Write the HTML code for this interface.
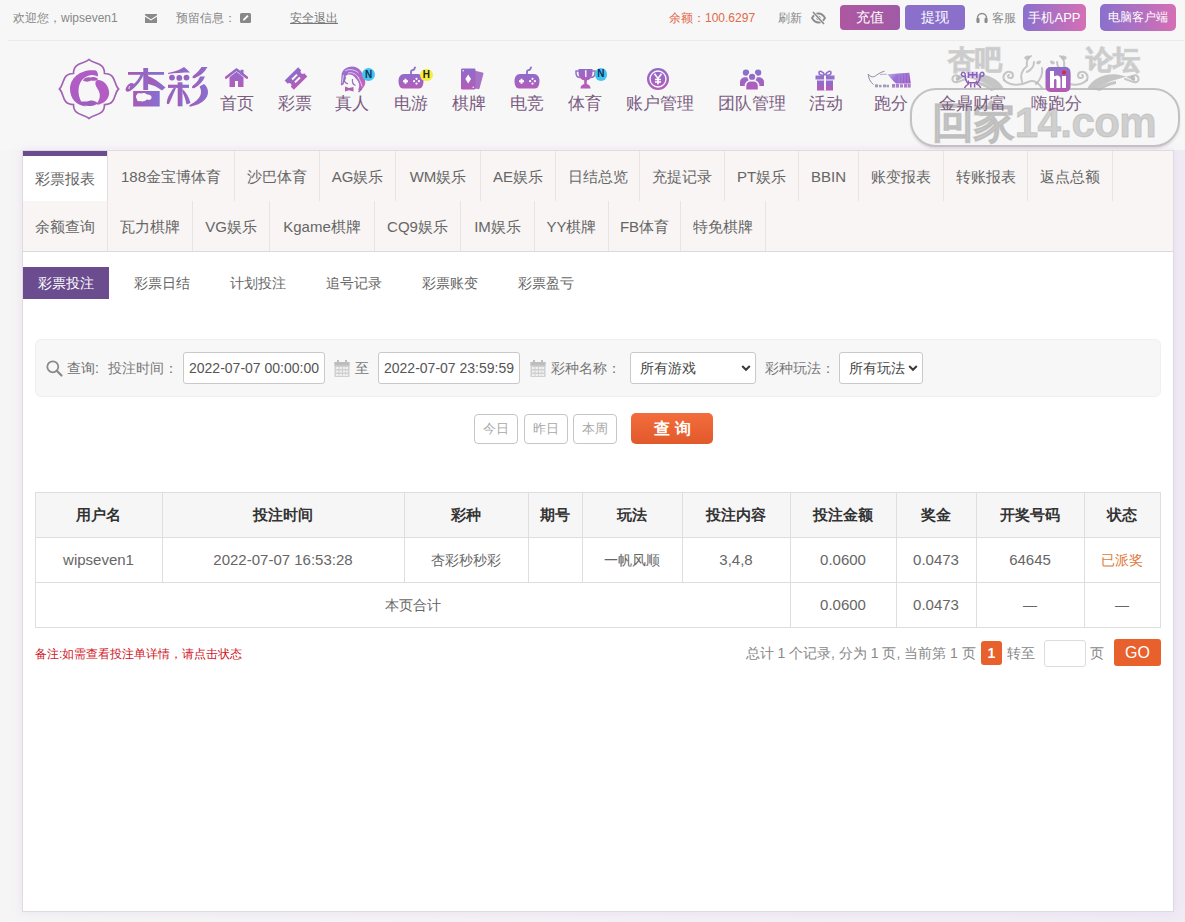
<!DOCTYPE html><html><head><meta charset="utf-8"><style>
*{margin:0;padding:0;box-sizing:border-box}
html,body{width:1185px;height:922px;overflow:hidden}
body{font-family:"Liberation Sans",sans-serif;background:linear-gradient(90deg,#f4f5f4 0,#f2f1f4 50%,#efecf4 100%);position:relative;color:#666}
.a{position:absolute;white-space:nowrap}
svg.a{overflow:visible}
#top{position:absolute;left:0;top:0;width:1185px;height:41px;background:#f7f7f7}
#topl{position:absolute;left:8px;top:40px;width:1176px;height:1px;background:#ebebeb}
.t{position:absolute;font-size:12px;line-height:16px;color:#888;white-space:nowrap}
.btn{position:absolute;border-radius:4px;color:#fff;text-align:center;white-space:nowrap}
#hdr{position:absolute;left:0;top:41px;width:1185px;height:109px;background:#f7f7f7}
.nav{position:absolute;font-size:17px;line-height:17px;color:#7b5c82;white-space:nowrap}
#panel{position:absolute;left:22px;top:150px;width:1152px;height:762px;background:#fff;border:1px solid #dddbe0;box-shadow:0 0 9px rgba(220,170,240,.26)}
.tabbg{position:absolute;left:23px;top:151px;width:1150px;height:101px;background:#f8f5f4;border-bottom:1px solid #dbd9d9}
.tab{position:absolute;height:50px;border-right:1px solid #e8e4e4;font-size:15px;line-height:51px;color:#666;text-align:center;white-space:nowrap}
.tab.on{background:#fff;box-shadow:inset 0 5px 0 #6b4d8f;line-height:56px;border-right-color:#e2dede}
.sub{position:absolute;top:267px;height:32px;font-size:14px;line-height:32px;color:#666;white-space:nowrap;text-align:center}
.sub.on{background:#6b4d8f;color:#fff}
.lbl{position:absolute;font-size:14px;line-height:16px;color:#777;white-space:nowrap}
.inp{position:absolute;height:32px;background:#fff;border:1px solid #c9c9c9;border-radius:3px;font-size:14px;line-height:30px;color:#555;white-space:nowrap;overflow:hidden}
.sbtn{position:absolute;top:414px;width:44px;height:30px;border:1px solid #c6c6c6;border-radius:4px;font-size:13px;line-height:28px;color:#a8a8a8;text-align:center;background:#fff}
.hl{position:absolute;height:1px;background:#dedede}
.vl{position:absolute;width:1px;background:#dedede}
.c{position:absolute;text-align:center;font-size:14px;line-height:16px;color:#666;white-space:nowrap}
.c.h{color:#333;font-weight:bold;font-size:15px}
</style></head><body>
<div id="top"></div><div id="topl"></div>
<div class="t" style="left:13px;top:10px">欢迎您，wipseven1</div>
<svg class="a" style="left:145px;top:14px" width="12" height="9" viewBox="0 0 12 9"><path d="M0 0H12V1.3L6 5.2 0 1.3Z M0 2.8L6 6.6 12 2.8V9H0Z" fill="#8a8a8a"/></svg>
<div class="t" style="left:176px;top:10px">预留信息：</div>
<svg class="a" style="left:240px;top:13px" width="11" height="10" viewBox="0 0 11 10"><rect width="11" height="10" rx="1.5" fill="#888"/><path d="M2.8 7.6L3.3 5.9 7.3 1.9 8.6 3.2 4.6 7.2Z" fill="#fff"/></svg>
<div class="t" style="left:290px;top:10px;color:#777;text-decoration:underline">安全退出</div>
<div class="t" style="left:669px;top:10px;color:#e2694a">余额：100.6297</div>
<div class="t" style="left:778px;top:10px;color:#888">刷新</div>
<svg class="a" style="left:811px;top:11px" width="15" height="14" viewBox="0 0 15 14"><path d="M1 7C3 3.5 5 2.5 7.5 2.5S12 3.5 14 7C12 10.5 10 11.5 7.5 11.5S3 10.5 1 7Z" fill="none" stroke="#8a8a8a" stroke-width="1.8"/><circle cx="7.5" cy="7" r="2.2" fill="#8a8a8a"/><path d="M2 1L13 13" stroke="#f7f7f7" stroke-width="3"/><path d="M2 1L13 13" stroke="#8a8a8a" stroke-width="1.6"/></svg>
<div class="btn" style="left:840px;top:5px;width:60px;height:25px;line-height:25px;font-size:14px;border-radius:4px;background:linear-gradient(90deg,#ae57a1,#a05ba6)">充值</div>
<div class="btn" style="left:905px;top:5px;width:60px;height:25px;line-height:25px;font-size:14px;border-radius:4px;background:#8a70cb">提现</div>
<svg class="a" style="left:976px;top:12px" width="12" height="11" viewBox="0 0 12 11"><path d="M1.5 9V6A4.5 4.5 0 0 1 10.5 6V9" fill="none" stroke="#8a8a8a" stroke-width="1.4"/><rect x="0.5" y="6" width="3" height="5" rx="1" fill="#8a8a8a"/><rect x="8.5" y="6" width="3" height="5" rx="1" fill="#8a8a8a"/></svg>
<div class="t" style="left:992px;top:10px;color:#888">客服</div>
<div class="btn" style="left:1023px;top:4px;width:63px;height:27px;line-height:27px;font-size:13px;border-radius:5px;background:linear-gradient(90deg,#8a70cc,#d66fb5)">手机APP</div>
<div class="btn" style="left:1100px;top:4px;width:76px;height:27px;line-height:27px;font-size:12px;border-radius:5px;background:linear-gradient(90deg,#8a70cc,#d66fb5)">电脑客户端</div>
<div id="hdr"></div>
<svg width="0" height="0" style="position:absolute"><defs>
<linearGradient id="pg" x1="0" y1="0" x2="0" y2="1"><stop offset="0" stop-color="#8f6ccb"/><stop offset="1" stop-color="#b45cb8"/></linearGradient>
<linearGradient id="pg2" x1="0" y1="0" x2="1" y2="1"><stop offset="0" stop-color="#8a6fcc"/><stop offset="1" stop-color="#c05fb4"/></linearGradient>
<linearGradient id="lg" x1="0" y1="0" x2="1" y2="0"><stop offset="0" stop-color="#a85bb2"/><stop offset="1" stop-color="#8c6dcb"/></linearGradient>
</defs></svg>
<svg class="a" style="left:56px;top:56px" width="66" height="66" viewBox="0 0 66 66">
<defs><linearGradient id="emg" x1="0" y1="0" x2="1" y2="1"><stop offset="0" stop-color="#b95bc6"/><stop offset="1" stop-color="#9b5fc0"/></linearGradient></defs>
<path d="M33.0 3.5C37.5 8.5 48.5 5.5 48.5 17.5C60.5 17.5 57.5 28.5 62.5 33.0C57.5 37.5 60.5 48.5 48.5 48.5C48.5 60.5 37.5 57.5 33.0 62.5C28.5 57.5 17.5 60.5 17.5 48.5C5.5 48.5 8.5 37.5 3.5 33.0C8.5 28.5 5.5 17.5 17.5 17.5C17.5 5.5 28.5 8.5 33.0 3.5Z" fill="none" stroke="#a263b2" stroke-width="1.7"/>
<path d="M40 14.5C26 12.5 14 21 14 33C14 43 21 49.5 30 50.5C25 47 22.5 41 22.5 35C22.5 26 28 19.5 36 19C38 19 40 19.5 42 20.5C42 17.5 41.5 15.5 40 14.5Z" fill="url(#emg)"/>
<path d="M27 24.5C28 21.5 32 20.5 35 21.5C37 20.5 41 21 42 23.5C40 25 37 25 35 24.5C33 26 29 26 27 24.5Z" fill="#a95dbd"/>
<path d="M42 24C47 24 52 28.5 53 35C54 41 50 46.5 43 48.5C41 49 40 48 41.5 46.5C44 43 44.5 39 43 35.5C42 33 40 31 39.5 28.5C39 26 40 24 42 24Z" fill="#b25cc4"/>
<path d="M23 47C26 44.5 30 46 33 45C36 44 39 44.5 42 47.5C37 51 28 51 23 47Z" fill="#9d5fbf"/>
</svg>
<svg class="a" style="left:120px;top:55px" width="95" height="60" viewBox="0 0 95 60">
<defs><linearGradient id="lt" x1="0" y1="0" x2="1" y2="0"><stop offset="0" stop-color="#a65ab6"/><stop offset="1" stop-color="#8670d0"/></linearGradient></defs>
<g fill="url(#lt)">
<rect x="8" y="17" width="36" height="2.8"/>
<rect x="23.3" y="13" width="4.8" height="22"/>
<path d="M24 19C21 26 16 32 10 36C6 38 4.5 35 6.5 32C8.5 28.5 12 27 14 29C17 26 19.5 22.5 21 18.5Z"/><path d="M10 31C9 32 8.5 33.5 9.5 34" fill="none" stroke="#f7f7f7" stroke-width="1"/>
<path d="M28 21C34 23 40 27.5 45.5 32.5L42 35.5C37.5 32 33 30 28 29Z"/>
<path d="M13.2 36H39.7V51.5H13.2ZM17 39.5C17 38.5 19 38 21 38.5C23 37.5 26 38 27 39.5C30 39.5 32 41 31.5 43C31 45 29 45.5 27 44.5C25 46.5 22 47 20 46C18 47 16.5 45.5 17 44C15.5 43 15.5 40.5 17 39.5Z" fill-rule="evenodd"/>
<path d="M48 18C53 17 60 15 64 12C66 13.5 68 15.5 70 17.5C63 17.5 55 18 48 19Z"/>
<circle cx="52" cy="22.6" r="2.9"/><circle cx="59.3" cy="22.9" r="2.9"/><circle cx="66.5" cy="22.6" r="2.9"/>
<rect x="48" y="29.7" width="21" height="3.2"/>
<rect x="57.7" y="27.3" width="4.8" height="24"/>
<path d="M56 33C54 38 51.5 43 49.5 48C48.5 50 46.5 49.5 46.8 47C47.2 43.5 49 40 51 37C52 35 53 33.5 54 33Z"/>
<path d="M62.5 34C66 37.5 69 42 70.5 48L66.5 49.5C65.5 44.5 64 40 62.5 37.5Z"/>
<path d="M87.5 12C84 18 80.5 20.5 75 23C72.5 24 71.5 22 73.5 20.5C77 18 79.5 15 81.5 12Z"/>
<path d="M85 21.5C83 26.5 79.5 30 74.5 33C72 34 71 32 73 30.5C76.5 28 78.5 25 80 21.5Z"/>
<path d="M84 29C88 32.5 89 37 87 41.5C84 47 78 50 71 51.5C69 52 68.5 50.5 70.5 49.5C75.5 47 79 44 80.5 40C81.5 37 81 34 79.5 31.5Z"/>
</g></svg>
<div class="a" style="left:948px;top:44px;font-size:27px;line-height:32px;font-weight:bold;-webkit-text-stroke:1.2px rgba(200,200,200,.7);color:rgba(200,200,200,.7)">杏吧</div>
<div class="a" style="left:1086px;top:44px;font-size:27px;line-height:32px;font-weight:bold;-webkit-text-stroke:1.2px rgba(200,200,200,.7);color:rgba(200,200,200,.7)">论坛</div>
<svg class="a" style="left:0;top:0" width="1185" height="150" viewBox="0 0 1185 150"><g fill="none" stroke="rgba(185,185,185,.8)" stroke-width="2" stroke-linecap="round">
<path d="M1004 80C1002 75 1006 71 1010 72C1014 73 1014 78 1010 78C1008 78 1007 76 1009 75"/>
<path d="M1004 80C1010 86 1020 86 1028 82C1034 79 1038 82 1042 88"/>
<path d="M1022 82C1020 76 1022 70 1027 66M1027 66C1026 61 1028 58 1031 56M1027 72C1031 70 1034 66 1034 62"/>
<path d="M1036 84C1040 80 1043 74 1042 68"/>
<path d="M966 79C960 81 955 84 953 81C951 77 955 74 958 76C960 77.5 959 80 957 79.5"/>
</g>
<g fill="rgba(180,180,180,.75)">
<path d="M1004 89C998 77 982 71 967 76C961 78 957 82 956 80C955 76 959 74 962 76C972 79 986 81 995 90Z"/><path d="M975 81C983 82 990 85 995 90L991 91C986 87 981 85 975 84Z"/>
<path d="M1024 58C1026 55 1029 55 1030 57C1029 60 1026 61 1024 58Z"/>
<path d="M1036 63C1038 60 1041 60 1041 62C1040 65 1037 65 1036 63Z"/>
</g><g transform="translate(2091 0) scale(-1 1)"><g fill="none" stroke="rgba(185,185,185,.8)" stroke-width="2" stroke-linecap="round">
<path d="M1004 80C1002 75 1006 71 1010 72C1014 73 1014 78 1010 78C1008 78 1007 76 1009 75"/>
<path d="M1004 80C1010 86 1020 86 1028 82C1034 79 1038 82 1042 88"/>
<path d="M1022 82C1020 76 1022 70 1027 66M1027 66C1026 61 1028 58 1031 56M1027 72C1031 70 1034 66 1034 62"/>
<path d="M1036 84C1040 80 1043 74 1042 68"/>
<path d="M966 79C960 81 955 84 953 81C951 77 955 74 958 76C960 77.5 959 80 957 79.5"/>
</g>
<g fill="rgba(180,180,180,.75)">
<path d="M1004 89C998 77 982 71 967 76C961 78 957 82 956 80C955 76 959 74 962 76C972 79 986 81 995 90Z"/><path d="M975 81C983 82 990 85 995 90L991 91C986 87 981 85 975 84Z"/>
<path d="M1024 58C1026 55 1029 55 1030 57C1029 60 1026 61 1024 58Z"/>
<path d="M1036 63C1038 60 1041 60 1041 62C1040 65 1037 65 1036 63Z"/>
</g></g></svg>
<div class="a" style="left:910px;top:88px;width:270px;height:59px;border:2px solid rgba(185,185,185,.85);border-radius:26px;box-shadow:0 2px 2px rgba(150,150,150,.25)"></div>
<div class="a" style="left:932px;top:95px;font-size:42px;line-height:56px;font-weight:bold;-webkit-text-stroke:1px rgba(180,180,180,.6);color:rgba(180,180,180,.6);letter-spacing:-0.6px">回家14.com</div>
<div class="nav" style="left:176.85px;top:94.5px;width:120px;text-align:center">首页</div>
<div class="nav" style="left:234.50px;top:94.5px;width:120px;text-align:center">彩票</div>
<div class="nav" style="left:292.00px;top:94.5px;width:120px;text-align:center">真人</div>
<div class="nav" style="left:350.90px;top:94.5px;width:120px;text-align:center">电游</div>
<div class="nav" style="left:408.50px;top:94.5px;width:120px;text-align:center">棋牌</div>
<div class="nav" style="left:466.50px;top:94.5px;width:120px;text-align:center">电竞</div>
<div class="nav" style="left:524.50px;top:94.5px;width:120px;text-align:center">体育</div>
<div class="nav" style="left:599.70px;top:94.5px;width:120px;text-align:center">账户管理</div>
<div class="nav" style="left:691.70px;top:94.5px;width:120px;text-align:center">团队管理</div>
<div class="nav" style="left:766.35px;top:94.5px;width:120px;text-align:center">活动</div>
<div class="nav" style="left:831.35px;top:94.5px;width:120px;text-align:center">跑分</div>
<div class="nav" style="left:913.10px;top:94.5px;width:120px;text-align:center">金鼎财富</div>
<div class="nav" style="left:996.80px;top:94.5px;width:120px;text-align:center">嗨跑分</div>
<svg class="a" style="left:225px;top:68px" width="23" height="19" viewBox="0 0 23 19"><path d="M1.2 9.6L11.5 1.5 21.8 9.6" fill="none" stroke="url(#pg)" stroke-width="2.6" stroke-linejoin="round" stroke-linecap="round"/><rect x="15.5" y="1.8" width="3" height="5" fill="#8f6ccb"/><path d="M4.5 9.3L11.5 3.8 18.5 9.3V19H13V13H10V19H4.5Z" fill="url(#pg)"/></svg>
<svg class="a" style="left:278px;top:62px" width="36" height="32" viewBox="0 0 36 32"><g transform="rotate(-45 18 16.5)"><path d="M8.5 10H27.5V14.3A2.2 2.2 0 0 0 27.5 18.7V23H8.5V18.7A2.2 2.2 0 0 0 8.5 14.3Z" fill="url(#pg)"/><rect x="14.5" y="13.5" width="7" height="1.9" fill="#fff"/><rect x="14.5" y="17.6" width="7" height="1.9" fill="#fff"/></g></svg>
<svg class="a" style="left:336px;top:62px" width="40" height="34" viewBox="0 0 40 34">
<defs><linearGradient id="hg" x1="0" y1="0" x2="1" y2="1"><stop offset="0" stop-color="#8f72d2"/><stop offset="1" stop-color="#c761bb"/></linearGradient></defs>
<path d="M5.5 14C5.5 8 10.5 4.5 16 4.5C22 4.8 25 8.5 27 12.5C29 16.5 30 20 28.8 23C27.8 25.5 26 26.5 24.5 29L22.2 28C23 25.5 24 23 22.3 20C20.5 17 18.5 14.5 16 13C13.5 12 10.5 12.3 9.5 14.5C9 17 8.5 19.5 7.5 22.5L5 23.5C4.5 20.5 5.5 17.5 5.5 14Z" fill="url(#hg)"/>
<g fill="none" stroke="#f0e2f6" stroke-width="0.8"><path d="M9 9C13 6.5 19 7.5 22.5 11"/><path d="M12 11C16 9.8 20 12 23 16"/><path d="M21.5 14.5C24 18 25 21 26.2 24.5"/><path d="M7.5 13C7 16 6.5 19 6 21"/></g>
<path d="M9.5 15C9 17 8.7 18.5 8 19.5L9.5 20.2C9.8 21.2 10.5 21.8 12 21.6" fill="none" stroke="#8a70b0" stroke-width="1.2"/>
<path d="M16.5 17C16 20 17 22.5 19.5 23.5" fill="none" stroke="#9a6cbf" stroke-width="1.2"/>
<path d="M9 24.5L13 26 17.5 25V29.5L13 28.2 9 29.5Z" fill="#b060b0"/>
<path d="M26 26.5L22.5 30" stroke="#9a6aa8" stroke-width="1.4"/>
</svg>
<div class="a" style="left:362px;top:68px;width:13px;height:13px;border-radius:50%;background:#3fc6ee;color:#1a2a5a;font-size:10px;line-height:13px;text-align:center;font-weight:bold">N</div>
<svg class="a" style="left:398px;top:66.5px" width="26" height="22" viewBox="0 0 26 22">
<path d="M13 7V4.5C13 3 15 3.5 16 2.5C16.8 1.8 16.5 1 17 0.5" fill="none" stroke="#8e6fca" stroke-width="1.8" stroke-linecap="round"/>
<path d="M6 7H20C23.5 7 25.5 10 25.5 14C25.5 18 24 21.5 21 21.5H5C2 21.5 0.5 18 0.5 14C0.5 10 2.5 7 6 7Z" fill="url(#pg)"/>
<path d="M5 14.2H10M7.5 11.7V16.7" stroke="#fff" stroke-width="1.9"/>
<circle cx="18.5" cy="11.8" r="1.1" fill="#fff"/><circle cx="18.5" cy="16.6" r="1.1" fill="#fff"/><circle cx="16.1" cy="14.2" r="1.1" fill="#fff"/><circle cx="20.9" cy="14.2" r="1.1" fill="#fff"/>
</svg>
<div class="a" style="left:420px;top:68.5px;width:12.5px;height:12.5px;border-radius:50%;background:#f5ef3c;color:#222;font-size:10px;line-height:12.5px;text-align:center;font-weight:bold">H</div>
<svg class="a" style="left:460px;top:68px" width="24" height="22" viewBox="0 0 24 22">
<path d="M14 2.5L22.5 4.5C23.3 4.7 23.6 5.3 23.4 6L19.6 20.3C19.4 21 18.8 21.3 18 21.1L15 20.4Z" fill="#a673c6"/>
<rect x="1" y="0.5" width="14.5" height="21" rx="1.3" fill="url(#pg)"/>
<path d="M8.2 6.5L11 11 8.2 15.5 5.4 11Z" fill="#fff"/>
<rect x="2.5" y="2" width="1.4" height="1.4" fill="#fff" opacity=".8"/><rect x="12.6" y="18.6" width="1.4" height="1.4" fill="#fff" opacity=".8"/>
</svg>
<svg class="a" style="left:514px;top:66.5px" width="26" height="22" viewBox="0 0 26 22">
<path d="M13 7V4.5C13 3 15 3.5 16 2.5C16.8 1.8 16.5 1 17 0.5" fill="none" stroke="#8e6fca" stroke-width="1.8" stroke-linecap="round"/>
<path d="M6 7H20C23.5 7 25.5 10 25.5 14C25.5 18 24 21.5 21 21.5H5C2 21.5 0.5 18 0.5 14C0.5 10 2.5 7 6 7Z" fill="url(#pg)"/>
<path d="M5 14.2H10M7.5 11.7V16.7" stroke="#fff" stroke-width="1.9"/>
<circle cx="18.5" cy="11.8" r="1.1" fill="#fff"/><circle cx="18.5" cy="16.6" r="1.1" fill="#fff"/><circle cx="16.1" cy="14.2" r="1.1" fill="#fff"/><circle cx="20.9" cy="14.2" r="1.1" fill="#fff"/>
</svg>
<svg class="a" style="left:575px;top:68px" width="21" height="21" viewBox="0 0 21 21">
<path d="M3.5 1H17.5C17.5 1 17.5 3 17.5 4C17.5 9.5 14.5 12.5 10.5 12.5C6.5 12.5 3.5 9.5 3.5 4Z" fill="url(#pg)"/>
<path d="M4 3H1V5C1 8 3 9.5 5.5 9.5M17 3H20V5C20 8 18 9.5 15.5 9.5" fill="none" stroke="#9470c8" stroke-width="1.5"/>
<rect x="9.2" y="12" width="2.6" height="4.5" fill="#b05fb8"/>
<path d="M5.5 20.5C5.5 17.5 7.5 16 10.5 16S15.5 17.5 15.5 20.5Z" fill="#b45cb8"/>
<path d="M10 3.5L10.8 3V9" stroke="#fff" stroke-width="1.3" fill="none"/>
</svg>
<div class="a" style="left:594.5px;top:68px;width:12.5px;height:12.5px;border-radius:50%;background:#3fc6ee;color:#1a2a5a;font-size:10px;line-height:12.5px;text-align:center;font-weight:bold">N</div>
<svg class="a" style="left:647px;top:67.5px" width="22" height="22" viewBox="0 0 22 22">
<circle cx="11" cy="11" r="11" fill="url(#pg)"/><circle cx="11" cy="11" r="8" fill="none" stroke="#fff" stroke-width="1.3"/>
<path d="M7.5 5.8L11 10.5 14.5 5.8M11 10.5V16.5M8 11.5H14M8 14H14" fill="none" stroke="#fff" stroke-width="1.5"/>
</svg>
<svg class="a" style="left:730px;top:62px" width="44" height="32" viewBox="0 0 44 32">
<defs><linearGradient id="ug" gradientUnits="userSpaceOnUse" x1="0" y1="7" x2="0" y2="28"><stop offset="0" stop-color="#8274d0"/><stop offset="1" stop-color="#b658bb"/></linearGradient></defs>
<g fill="url(#ug)">
<circle cx="16" cy="10.6" r="3.2"/><circle cx="28.1" cy="10.6" r="3.2"/>
<path d="M10 24V20C10 17 12.5 15.2 15.5 15.2H17C20 15.2 21 17 21 19V24Z"/>
<path d="M23 24V19C23 17 24 15.2 27 15.2H28.5C31.5 15.2 34 17 34 20V24Z"/>
</g>
<g stroke="#f7f7f7" stroke-width="1.6" fill="url(#ug)">
<circle cx="22.1" cy="14.9" r="3.9"/>
<path d="M15.5 28.2V24C15.5 20.8 18 18.6 21 18.6H23.2C26.2 18.6 28.6 20.8 28.6 24V28.2Z"/>
</g></svg>
<svg class="a" style="left:815px;top:70px" width="20" height="21" viewBox="0 0 20 21">
<path d="M10 5.5C8 1 4 0 4 3C4 5 8 5.5 10 5.5C12 5.5 16 5 16 3C16 0 12 1 10 5.5Z" fill="none" stroke="#9070cb" stroke-width="1.6"/>
<rect x="0.5" y="5.5" width="19" height="4" fill="#9470cb"/>
<rect x="2" y="10.5" width="16" height="10" fill="url(#pg)"/>
<rect x="9" y="5.5" width="2" height="15" fill="#f6f5f7"/>
</svg>
<svg class="a" style="left:862px;top:64px" width="56" height="28" viewBox="0 0 56 28">
<defs><linearGradient id="rg" x1="0" y1="0" x2="1" y2="0.4"><stop offset="0" stop-color="#c8b8e8"/><stop offset=".45" stop-color="#9a74d4"/><stop offset="1" stop-color="#9b5cc8"/></linearGradient></defs>
<path d="M6.2 10C8 12.5 10 13.5 12.5 12.5C15 11 17.5 8.5 22.5 7.2" fill="none" stroke="#8d8d9d" stroke-width="1"/>
<path d="M6.2 10C6.5 14 8 18 11.5 20.5" fill="none" stroke="#8d8d9d" stroke-width="1"/>
<path d="M18 10.5L25 10.2" stroke="#a9a0c8" stroke-width="0.8"/>
<path d="M25.5 10.3L47.3 8.8L48.8 19.5L34 19.5C30.5 16.5 28 13 25.5 10.3Z" fill="url(#rg)"/>
<g stroke="#b89be0" stroke-width="0.6"><path d="M37 9V19M40 9V19M43 9V19M46 9V19"/></g>
<g fill="#8a7aa0" opacity=".75"><rect x="13" y="20.3" width="3" height="3"/><rect x="17" y="20.8" width="2.5" height="2.5"/><rect x="21" y="20.5" width="3" height="2.8"/><rect x="24.5" y="20.8" width="2.5" height="2.5"/></g>
<g fill="#9a62c0" opacity=".8"><rect x="30" y="20" width="3.2" height="3.6"/><rect x="34" y="20" width="3" height="3.6"/><rect x="38" y="20.3" width="3" height="3.2"/><rect x="42" y="20" width="3" height="3.6"/><rect x="45.5" y="20" width="3.2" height="3.6"/></g>
</svg>
<svg class="a" style="left:1045px;top:66.5px" width="26" height="25" viewBox="0 0 26 25">
<defs><linearGradient id="hig" x1="0" y1="0" x2="0" y2="1"><stop offset="0" stop-color="#8c6dcc"/><stop offset="1" stop-color="#b55ab3"/></linearGradient></defs>
<rect x="0.5" y="0" width="25" height="25" rx="5" fill="url(#hig)"/>
<path d="M5 4H9V9.5C10 8.7 11 8.5 12 8.5C14.5 8.5 15.5 10 15.5 12.5V21H11.5V13.5C11.5 12.5 11 12 10.3 12S9 12.5 9 13.5V21H5Z" fill="#fff"/>
<rect x="17" y="9" width="4" height="12" fill="#fff"/>
<circle cx="19" cy="5.5" r="2" fill="#e8203a"/>
</svg>
<svg class="a" style="left:955px;top:64px" width="35" height="28" viewBox="0 0 35 28">
<defs><linearGradient id="dg" x1="0" y1="0" x2="0" y2="1"><stop offset="0" stop-color="#8068c0"/><stop offset="1" stop-color="#9a58b0"/></linearGradient></defs>
<rect x="12.5" y="7.6" width="10" height="6.4" fill="#d9c8f4"/>
<g fill="none" stroke="url(#dg)" stroke-width="1.5">
<path d="M12 7.3H23.5"/><path d="M13.5 8V14M21.8 8V14M13.5 10.8H21.8M17.6 8V14"/>
<path d="M12 15.8H23"/><path d="M13.3 16.5V18.8H21.8V16.5"/>
<path d="M10.5 12.5C7 13 5.5 10.5 6.8 9C8.2 7.5 10.5 8.8 10.2 10.8C10 14 11 17.5 13.5 20C12 21 10.5 22 9.5 24"/>
<path d="M24.8 12.5C28.3 13 29.8 10.5 28.5 9C27.1 7.5 24.8 8.8 25.1 10.8C25.3 14 24.3 17.5 21.8 20C23.3 21 24.8 22 25.8 24"/>
<path d="M15.8 19.5V23.5M19.6 19.5V23.5"/>
</g></svg>
<div id="panel"></div>
<div class="tabbg"></div>
<div class="tab on" style="left:23px;top:151px;width:85px">彩票报表</div>
<div class="tab" style="left:108px;top:151px;width:127px">188金宝博体育</div>
<div class="tab" style="left:235px;top:151px;width:85px">沙巴体育</div>
<div class="tab" style="left:320px;top:151px;width:76px">AG娱乐</div>
<div class="tab" style="left:396px;top:151px;width:85px">WM娱乐</div>
<div class="tab" style="left:481px;top:151px;width:75px">AE娱乐</div>
<div class="tab" style="left:556px;top:151px;width:84px">日结总览</div>
<div class="tab" style="left:640px;top:151px;width:85px">充提记录</div>
<div class="tab" style="left:725px;top:151px;width:74px">PT娱乐</div>
<div class="tab" style="left:799px;top:151px;width:60px">BBIN</div>
<div class="tab" style="left:859px;top:151px;width:85px">账变报表</div>
<div class="tab" style="left:944px;top:151px;width:84px">转账报表</div>
<div class="tab" style="left:1028px;top:151px;width:85px">返点总额</div>
<div class="tab" style="left:23px;top:201px;width:85px">余额查询</div>
<div class="tab" style="left:108px;top:201px;width:85px">瓦力棋牌</div>
<div class="tab" style="left:193px;top:201px;width:77px">VG娱乐</div>
<div class="tab" style="left:270px;top:201px;width:105px">Kgame棋牌</div>
<div class="tab" style="left:375px;top:201px;width:86px">CQ9娱乐</div>
<div class="tab" style="left:461px;top:201px;width:74px">IM娱乐</div>
<div class="tab" style="left:535px;top:201px;width:74px">YY棋牌</div>
<div class="tab" style="left:609px;top:201px;width:72px">FB体育</div>
<div class="tab" style="left:681px;top:201px;width:85px">特免棋牌</div>
<div class="sub on" style="left:23px;width:86px">彩票投注</div>
<div class="sub" style="left:119px;width:86px">彩票日结</div>
<div class="sub" style="left:215px;width:86px">计划投注</div>
<div class="sub" style="left:311px;width:86px">追号记录</div>
<div class="sub" style="left:407px;width:86px">彩票账变</div>
<div class="sub" style="left:503px;width:86px">彩票盈亏</div>
<div class="a" style="left:35px;top:339px;width:1126px;height:58px;background:#f7f7f7;border:1px solid #f0f0f0;border-radius:6px"></div>
<svg class="a" style="left:46px;top:360px" width="17" height="17" viewBox="0 0 17 17"><circle cx="6.8" cy="6.8" r="5.5" fill="none" stroke="#8a8a8a" stroke-width="1.8"/><path d="M10.8 10.8L15.5 15.5" stroke="#8a8a8a" stroke-width="2.2" stroke-linecap="round"/></svg>
<div class="lbl" style="left:67px;top:360px;color:#6f6f6f">查询:</div>
<div class="lbl" style="left:108px;top:360px">投注时间：</div>
<div class="inp" style="left:183px;top:352px;width:142px;padding-left:5px">2022-07-07 00:00:00</div>
<svg class="a" style="left:333.5px;top:360px" width="16" height="17" viewBox="0 0 16 17"><rect x="0.5" y="2" width="15" height="15" fill="#d0d0d0"/><rect x="0.5" y="2" width="15" height="3.5" fill="#bdbdbd"/><rect x="3" y="0" width="2" height="3.5" fill="#bdbdbd"/><rect x="11" y="0" width="2" height="3.5" fill="#bdbdbd"/><g fill="#f0f0f0"><rect x="2" y="7" width="2.5" height="2"/><rect x="5.5" y="7" width="2.5" height="2"/><rect x="9" y="7" width="2.5" height="2"/><rect x="12" y="7" width="2" height="2"/><rect x="2" y="10.5" width="2.5" height="2"/><rect x="5.5" y="10.5" width="2.5" height="2"/><rect x="9" y="10.5" width="2.5" height="2"/><rect x="12" y="10.5" width="2" height="2"/><rect x="2" y="14" width="2.5" height="2"/><rect x="5.5" y="14" width="2.5" height="2"/><rect x="9" y="14" width="2.5" height="2"/><rect x="12" y="14" width="2" height="2"/></g></svg>
<div class="lbl" style="left:355px;top:360px">至</div>
<div class="inp" style="left:378px;top:352px;width:142px;padding-left:5px">2022-07-07 23:59:59</div>
<svg class="a" style="left:530px;top:360px" width="16" height="17" viewBox="0 0 16 17"><rect x="0.5" y="2" width="15" height="15" fill="#d0d0d0"/><rect x="0.5" y="2" width="15" height="3.5" fill="#bdbdbd"/><rect x="3" y="0" width="2" height="3.5" fill="#bdbdbd"/><rect x="11" y="0" width="2" height="3.5" fill="#bdbdbd"/><g fill="#f0f0f0"><rect x="2" y="7" width="2.5" height="2"/><rect x="5.5" y="7" width="2.5" height="2"/><rect x="9" y="7" width="2.5" height="2"/><rect x="12" y="7" width="2" height="2"/><rect x="2" y="10.5" width="2.5" height="2"/><rect x="5.5" y="10.5" width="2.5" height="2"/><rect x="9" y="10.5" width="2.5" height="2"/><rect x="12" y="10.5" width="2" height="2"/><rect x="2" y="14" width="2.5" height="2"/><rect x="5.5" y="14" width="2.5" height="2"/><rect x="9" y="14" width="2.5" height="2"/><rect x="12" y="14" width="2" height="2"/></g></svg>
<div class="lbl" style="left:551px;top:360px">彩种名称：</div>
<div class="inp" style="left:630px;top:352px;width:126px;padding-left:9px;color:#444">所有游戏<svg class="a" style="right:4px;top:11px" width="10" height="8" viewBox="0 0 10 8"><path d="M1.2 2L5 5.8 8.8 2" fill="none" stroke="#3a3a3a" stroke-width="2"/></svg></div>
<div class="lbl" style="left:764.5px;top:360px">彩种玩法：</div>
<div class="inp" style="left:839px;top:352px;width:84px;padding-left:9px;color:#444">所有玩法<svg class="a" style="right:4px;top:11px" width="10" height="8" viewBox="0 0 10 8"><path d="M1.2 2L5 5.8 8.8 2" fill="none" stroke="#3a3a3a" stroke-width="2"/></svg></div>
<div class="sbtn" style="left:474px">今日</div>
<div class="sbtn" style="left:523.5px">昨日</div>
<div class="sbtn" style="left:573px">本周</div>
<div class="btn" style="left:631px;top:413px;width:82px;height:31px;line-height:31px;font-size:16px;font-weight:bold;letter-spacing:5px;text-indent:5px;border-radius:5px;background:linear-gradient(#f36d3c,#e2592b)">查询</div>
<div class="a" style="left:35px;top:492px;width:1126px;height:45px;background:#f6f6f6"></div>
<div class="hl" style="left:35px;top:492px;width:1126px"></div>
<div class="hl" style="left:35px;top:537px;width:1126px"></div>
<div class="hl" style="left:35px;top:582px;width:1126px"></div>
<div class="hl" style="left:35px;top:627px;width:1126px"></div>
<div class="vl" style="left:35px;top:492px;height:136px"></div>
<div class="vl" style="left:162px;top:492px;height:90px"></div>
<div class="vl" style="left:404px;top:492px;height:90px"></div>
<div class="vl" style="left:528px;top:492px;height:90px"></div>
<div class="vl" style="left:582px;top:492px;height:90px"></div>
<div class="vl" style="left:682px;top:492px;height:90px"></div>
<div class="vl" style="left:790px;top:492px;height:136px"></div>
<div class="vl" style="left:896px;top:492px;height:136px"></div>
<div class="vl" style="left:976px;top:492px;height:136px"></div>
<div class="vl" style="left:1084px;top:492px;height:136px"></div>
<div class="vl" style="left:1160px;top:492px;height:136px"></div>
<div class="c h" style="left:35px;top:507px;width:127px">用户名</div>
<div class="c" style="left:35px;top:552px;width:127px"><span style="font-size:15px">wipseven1</span></div>
<div class="c h" style="left:162px;top:507px;width:242px">投注时间</div>
<div class="c" style="left:162px;top:552px;width:242px"><span style="font-size:15px">2022-07-07 16:53:28</span></div>
<div class="c h" style="left:404px;top:507px;width:124px">彩种</div>
<div class="c" style="left:404px;top:552px;width:124px">杏彩秒秒彩</div>
<div class="c h" style="left:528px;top:507px;width:54px">期号</div>
<div class="c" style="left:528px;top:552px;width:54px"></div>
<div class="c h" style="left:582px;top:507px;width:100px">玩法</div>
<div class="c" style="left:582px;top:552px;width:100px">一帆风顺</div>
<div class="c h" style="left:682px;top:507px;width:108px">投注内容</div>
<div class="c" style="left:682px;top:552px;width:108px"><span style="font-size:15px">3,4,8</span></div>
<div class="c h" style="left:790px;top:507px;width:106px">投注金额</div>
<div class="c" style="left:790px;top:552px;width:106px"><span style="font-size:15px">0.0600</span></div>
<div class="c h" style="left:896px;top:507px;width:80px">奖金</div>
<div class="c" style="left:896px;top:552px;width:80px"><span style="font-size:15px">0.0473</span></div>
<div class="c h" style="left:976px;top:507px;width:108px">开奖号码</div>
<div class="c" style="left:976px;top:552px;width:108px"><span style="font-size:15px">64645</span></div>
<div class="c h" style="left:1084px;top:507px;width:76px">状态</div>
<div class="c" style="left:1084px;top:552px;width:76px"><span style="color:#e0793c">已派奖</span></div>
<div class="c" style="left:35px;top:597px;width:755px">本页合计</div>
<div class="c" style="left:790px;top:597px;width:106px"><span style="font-size:15px">0.0600</span></div>
<div class="c" style="left:896px;top:597px;width:80px"><span style="font-size:15px">0.0473</span></div>
<div class="c" style="left:976px;top:597px;width:108px">—</div>
<div class="c" style="left:1084px;top:597px;width:76px">—</div>
<div class="a" style="left:35px;top:646px;font-size:12px;line-height:16px;color:#d0141e">备注:如需查看投注单详情，请点击状态</div>
<div class="a" style="left:745.5px;top:645px;font-size:14px;line-height:16px;color:#888">总计 1 个记录, 分为 1 页, 当前第 1 页</div>
<div class="a" style="left:981px;top:640.5px;width:21px;height:24px;border-radius:3px;background:#e8602c;color:#fff;font-weight:bold;font-size:14px;line-height:24px;text-align:center">1</div>
<div class="a" style="left:1006.5px;top:645px;font-size:14px;line-height:16px;color:#888">转至</div>
<div class="a" style="left:1044px;top:640px;width:42px;height:27px;border:1px solid #dcdcdc;border-radius:3px;background:#fff"></div>
<div class="a" style="left:1090px;top:645px;font-size:14px;line-height:16px;color:#888">页</div>
<div class="btn" style="left:1114px;top:639px;width:47px;height:27px;line-height:27px;font-size:16px;border-radius:3px;background:#e8602c">GO</div>
</body></html>
